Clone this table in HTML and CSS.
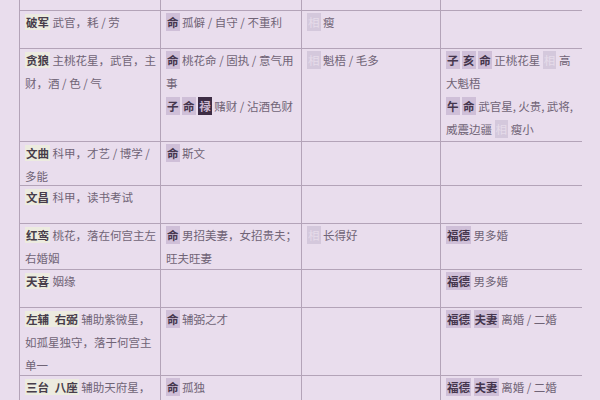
FILE: index.html
```html
<!DOCTYPE html>
<html lang="zh-CN">
<head>
<meta charset="utf-8">
<link rel="stylesheet" href="styles.css">
</head>
<body>
<div class="sheet">
  <div class="cell"></div><div class="cell"></div><div class="cell"></div><div class="cell"></div>

  <div class="cell"><span class="lab">破军</span> 武官，耗 / 劳</div>
  <div class="cell"><span class="tag">命</span> 孤僻 / 自守 / 不重利</div>
  <div class="cell"><span class="tag pale">相</span> 瘦</div>
  <div class="cell"></div>

  <div class="cell"><span class="lab">贪狼</span> 主桃花星，武官，主财，酒 / 色 / 气</div>
  <div class="cell"><span class="tag">命</span> 桃花命 / 固执 / 意气用事<br><span class="tag">子</span> <span class="tag">命</span> <span class="tag dark">禄</span> 赌财 / 沾酒色财</div>
  <div class="cell"><span class="tag pale">相</span> 魁梧 / 毛多</div>
  <div class="cell"><span class="tag">子</span> <span class="tag">亥</span> <span class="tag">命</span> 正桃花星 <span class="tag pale">相</span> 高大魁梧<br><span class="tag">午</span> <span class="tag">命</span> 武官星,&#8201;火贵,&#8201;武将,&#8201;威震边疆 <span class="tag pale">相</span> 瘦小</div>

  <div class="cell"><span class="lab">文曲</span> 科甲，才艺 / 博学 / 多能</div>
  <div class="cell"><span class="tag">命</span> 斯文</div>
  <div class="cell"></div>
  <div class="cell"></div>

  <div class="cell"><span class="lab">文昌</span> 科甲，读书考试</div>
  <div class="cell"></div>
  <div class="cell"></div>
  <div class="cell"></div>

  <div class="cell"><span class="lab">红鸾</span> 桃花，落在何宫主左右婚姻</div>
  <div class="cell"><span class="tag">命</span> 男招美妻，女招贵夫；旺夫旺妻</div>
  <div class="cell"><span class="tag pale">相</span> 长得好</div>
  <div class="cell"><span class="tag">福德</span> 男多婚</div>

  <div class="cell"><span class="lab">天喜</span> 姻缘</div>
  <div class="cell"></div>
  <div class="cell"></div>
  <div class="cell"><span class="tag">福德</span> 男多婚</div>

  <div class="cell"><span class="lab">左辅&ensp;右弼</span> 辅助紫微星，如孤星独守，落于何宫主单一</div>
  <div class="cell"><span class="tag">命</span> 辅弼之才</div>
  <div class="cell"></div>
  <div class="cell"><span class="tag">福德</span> <span class="tag">夫妻</span> 离婚 / 二婚</div>

  <div class="cell"><span class="lab">三台&ensp;八座</span> 辅助天府星，</div>
  <div class="cell"><span class="tag">命</span> 孤独</div>
  <div class="cell"></div>
  <div class="cell"><span class="tag">福德</span> <span class="tag">夫妻</span> 离婚 / 二婚</div>
</div>
</body>
</html>
```
FILE: styles.css
```css
html, body {
  margin: 0;
  padding: 0;
  width: 600px;
  height: 400px;
  overflow: hidden;
  background: #e9dded;
}

.sheet {
  margin-left: 19px;
  width: 563px;
  display: grid;
  grid-template-columns: 140px 140px 138px 141px;
  grid-template-rows: 10px 37px 92px 43px 37px 45px 37px 67px 24px;
  gap: 1px;
  padding: 0 1px;
  box-sizing: border-box;
  background: #b3a3b8;
  font-family: "Noto Sans CJK SC", "Noto Sans", sans-serif;
  font-size: 11.5px;
  line-height: 23px;
  color: #706476;
}

.cell {
  background: #e9dded;
  padding: 0 3px 0 5px;
  overflow: hidden;
}

.lab {
  font-weight: 700;
  color: #473d4a;
  background: #ecebdf;
  padding: 0 1px;
}

.tag {
  display: inline-block;
  line-height: 18px;
  padding: 0 1px;
  font-weight: 700;
  color: #45364d;
  background: #cfbfd8;
}

.tag.pale {
  color: #e6dcea;
  background: #d4c8dc;
  font-weight: 400;
}

.tag.dark {
  color: #cbb8d2;
  background: #3d2c44;
}
```
